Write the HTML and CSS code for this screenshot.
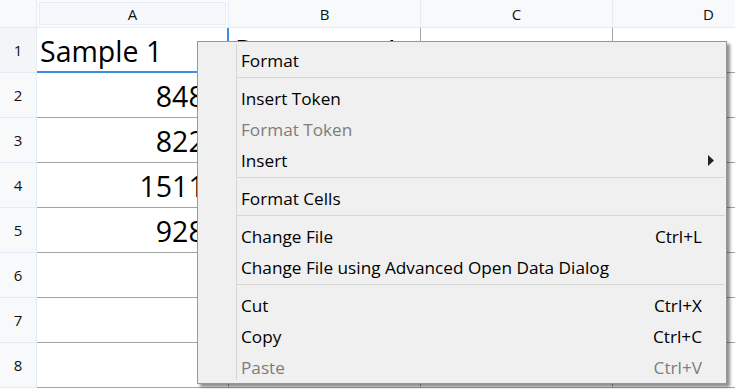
FILE: index.html
```html
<!DOCTYPE html>
<html>
<head>
<meta charset="utf-8">
<link rel="stylesheet" href="styles.css">
</head>
<body>
<div class="sheet">
  <div class="grid">
    <div class="hd corner"></div>
    <div class="hd col sel">A</div>
    <div class="hd col">B</div>
    <div class="hd col">C</div>
    <div class="hd col">D</div>

    <div class="hd row sel">1</div>
    <div class="cell a1">Sample 1</div>
    <div class="cell b1">Parameter 1</div>
    <div class="cell"></div>
    <div class="cell"></div>

    <div class="hd row">2</div>
    <div class="cell num">8481</div>
    <div class="cell"></div>
    <div class="cell"></div>
    <div class="cell"></div>

    <div class="hd row">3</div>
    <div class="cell num">8225</div>
    <div class="cell"></div>
    <div class="cell"></div>
    <div class="cell"></div>

    <div class="hd row">4</div>
    <div class="cell num">15112</div>
    <div class="cell"></div>
    <div class="cell"></div>
    <div class="cell"></div>

    <div class="hd row">5</div>
    <div class="cell num">9284</div>
    <div class="cell"></div>
    <div class="cell"></div>
    <div class="cell"></div>

    <div class="hd row">6</div>
    <div class="cell"></div>
    <div class="cell"></div>
    <div class="cell"></div>
    <div class="cell"></div>

    <div class="hd row">7</div>
    <div class="cell"></div>
    <div class="cell"></div>
    <div class="cell"></div>
    <div class="cell"></div>

    <div class="hd row">8</div>
    <div class="cell"></div>
    <div class="cell"></div>
    <div class="cell"></div>
    <div class="cell"></div>
  </div>

  <div class="menu">
    <div class="item"><span>Format</span></div>
    <div class="sep"></div>
    <div class="item"><span>Insert Token</span></div>
    <div class="item disabled"><span>Format Token</span></div>
    <div class="item"><span>Insert</span>
      <svg class="arrow" width="6" height="11" viewBox="0 0 6 11"><path d="M0 0 L6 5.5 L0 11 Z" fill="#222"/></svg>
    </div>
    <div class="sep"></div>
    <div class="item"><span>Format Cells</span></div>
    <div class="sep"></div>
    <div class="item"><span>Change File</span><span class="key">Ctrl+L</span></div>
    <div class="item"><span>Change File using Advanced Open Data Dialog</span></div>
    <div class="sep"></div>
    <div class="item"><span>Cut</span><span class="key">Ctrl+X</span></div>
    <div class="item"><span>Copy</span><span class="key">Ctrl+C</span></div>
    <div class="item disabled"><span>Paste</span><span class="key">Ctrl+V</span></div>
  </div>
</div>
</body>
</html>
```

FILE: styles.css
```css
html, body {
  margin: 0;
  padding: 0;
  background: #ffffff;
  overflow: hidden;
}

.sheet {
  position: relative;
  width: 735px;
  height: 389px;
  overflow: hidden;
  font-family: "Open Sans", "Noto Sans", sans-serif;
  color: #000;
}

.grid {
  display: grid;
  grid-template-columns: 37px repeat(4, 192px);
  grid-template-rows: 28px repeat(8, 45px);
}

.hd {
  box-sizing: border-box;
  background: #f8f9fb;
  border-right: 1px solid #e3ebf6;
  border-bottom: 1px solid #e3ebf6;
  display: flex;
  align-items: center;
  justify-content: center;
  font-size: 15px;
  color: #111;
}

.hd.col.sel {
  background: #f6f8fb;
  box-shadow: inset 0 0 0 2px #fafbfd, inset 0 0 0 3px #e6edf6;
}

.hd.row.sel {
  background: #f3f5f9;
}

.cell {
  box-sizing: border-box;
  border-right: 1px solid #a3a3a3;
  border-bottom: 1px solid #a3a3a3;
  display: flex;
  align-items: center;
  padding: 2px 7px 0 3px;
  font-size: 28.5px;
  white-space: nowrap;
  overflow: hidden;
}

.cell.a1 {
  border-bottom: 2px solid #3b8ee6;
  border-right: 2px solid #3b8ee6;
}

.cell.b1 {
  padding-left: 6px;
  padding-top: 0;
}

.cell.num {
  justify-content: flex-end;
}

.menu {
  position: absolute;
  left: 197px;
  top: 41px;
  width: 528px;
  box-sizing: content-box;
  background: #f0f0f0;
  border: 1px solid #979797;
  box-shadow: 3px 3px 3px rgba(0, 0, 0, 0.45);
  padding: 3px 0 0 0;
  font-size: 17.2px;
  color: #000;
}

.menu::before {
  content: "";
  position: absolute;
  left: 38px;
  top: 2px;
  bottom: 3px;
  width: 1px;
  background: #d6d6d6;
}

.item {
  height: 31px;
  box-sizing: border-box;
  display: flex;
  align-items: center;
  justify-content: space-between;
  padding: 0 24px 0 43px;
  white-space: nowrap;
}

.item.disabled {
  color: #7d7d7d;
}

.arrow {
  margin-right: -12px;
}

.sep {
  height: 1px;
  margin: 1px 1px 5px 38px;
  background: #d6d6d6;
}
```
